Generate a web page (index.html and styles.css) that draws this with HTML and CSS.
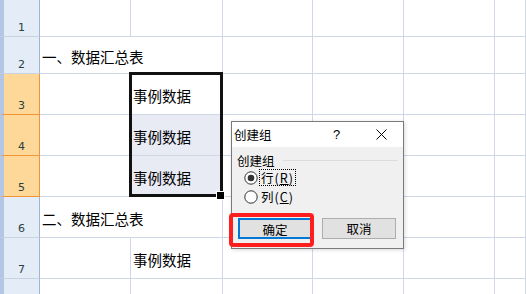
FILE: index.html
```html
<!DOCTYPE html>
<html lang="zh-CN">
<head>
    <meta charset="UTF-8">
    <title>创建组</title>
    <link rel="stylesheet" href="styles.css">
</head>
<body>
    <!-- Worksheet -->
    <div class="sheet">
        <div class="rh">1</div><div class="c"></div><div class="c"></div><div class="c"></div><div class="c"></div><div class="c"></div><div class="c"></div>
        <div class="rh">2</div><div class="c wide">一、数据汇总表</div><div class="c"></div><div class="c"></div><div class="c"></div><div class="c"></div>
        <div class="rh on">3</div><div class="c"></div><div class="c">事例数据</div><div class="c"></div><div class="c"></div><div class="c"></div><div class="c"></div>
        <div class="rh on">4</div><div class="c"></div><div class="c sel">事例数据</div><div class="c"></div><div class="c"></div><div class="c"></div><div class="c"></div>
        <div class="rh on">5</div><div class="c"></div><div class="c sel">事例数据</div><div class="c"></div><div class="c"></div><div class="c"></div><div class="c"></div>
        <div class="rh">6</div><div class="c wide">二、数据汇总表</div><div class="c"></div><div class="c"></div><div class="c"></div><div class="c"></div>
        <div class="rh">7</div><div class="c"></div><div class="c">事例数据</div><div class="c"></div><div class="c"></div><div class="c"></div><div class="c"></div>
        <div class="rh">8</div><div class="c"></div><div class="c">事例数据</div><div class="c"></div><div class="c"></div><div class="c"></div><div class="c"></div>
    </div>

    <!-- Selected range B3:B5 -->
    <div class="range"></div>

    <!-- Create group dialog -->
    <div class="dialog">
        <div class="titlebar">
            <span class="title">创建组</span>
            <span class="help">?</span>
            <svg class="close" width="11" height="11" viewBox="0 0 11 11">
                <path d="M0.5 0.5 L10.5 10.5 M10.5 0.5 L0.5 10.5" stroke="#000" stroke-width="1"/>
            </svg>
        </div>
        <div class="dlg-body">
            <div class="group-head">创建组</div>
            <div class="radio">
                <svg width="14" height="14" viewBox="0 0 14 14">
                    <circle cx="7" cy="7" r="6.2" fill="#fff" stroke="#333" stroke-width="1"/>
                    <circle cx="7" cy="7" r="3.3" fill="#333"/>
                </svg>
                <span class="lbl focus">行(<u>R</u>)</span>
            </div>
            <div class="radio">
                <svg width="14" height="14" viewBox="0 0 14 14">
                    <circle cx="7" cy="7" r="6.2" fill="#fff" stroke="#333" stroke-width="1"/>
                </svg>
                <span class="lbl">列(<u>C</u>)</span>
            </div>
            <div class="buttons">
                <button class="btn primary">确定</button>
                <button class="btn">取消</button>
            </div>
        </div>
    </div>

    <!-- Red highlight on OK -->
    <div class="mark"></div>
</body>
</html>
```

FILE: styles.css
```css
/* General */
* {
    box-sizing: border-box;
}
html, body {
    margin: 0;
    height: 100%;
    overflow: hidden;
    background-color: white;
}
body {
    position: relative;
    font-family: "Noto Sans CJK SC", sans-serif;
    color: black;
}

/* Worksheet grid */
.sheet {
    display: grid;
    grid-template-columns: 40px 91px 92px 90px 91px 91px 1fr;
    grid-template-rows: 37px 37px repeat(6, 41px);
}
.c {
    border-right: 1px solid #d0d7e5;
    border-bottom: 1px solid #d0d7e5;
    font-size: 14.5px;
    padding: 2px 0 0 2px;
    display: flex;
    align-items: center;
    white-space: nowrap;
}
.wide {
    grid-column: span 2;
}
.sel {
    background-color: #e8eaf4;
}
.rh {
    background-color: #e4ecf7;
    border-left: 4px solid #b3c7e4;
    border-right: 1px solid #9eb6ce;
    border-bottom: 1px solid #c5d3e3;
    font: 11px "DejaVu Sans", sans-serif;
    color: #27413e;
    display: flex;
    align-items: flex-end;
    justify-content: center;
    padding-bottom: 2px;
}
.rh.on {
    background-color: #fdd898;
    border-right-color: #f29436;
    border-bottom-color: #f29436;
}

/* Selection outline */
.range {
    position: absolute;
    left: 129px;
    top: 72px;
    width: 94px;
    height: 125px;
    border: 3px solid #111;
}
.range::after {
    content: "";
    position: absolute;
    right: -5px;
    bottom: -6px;
    width: 7px;
    height: 7px;
    background-color: #000;
    border: 1px solid #fff;
}

/* Dialog */
.dialog {
    position: absolute;
    left: 231px;
    top: 121px;
    width: 173px;
    height: 128px;
    border: 1px solid #7a7a7a;
    background-color: #f0f0f0;
    font-size: 12.5px;
    box-shadow: 1px 1px 4px rgba(0, 0, 0, 0.15);
}
.titlebar {
    height: 25px;
    background-color: white;
    display: flex;
    align-items: center;
    padding: 0 16px 1px 2px;
}
.title {
    flex: 1;
}
.help {
    width: 10px;
    margin-right: 33px;
    font: 13px "Liberation Sans", sans-serif;
}
.dlg-body {
    padding: 5px 5px 0 5px;
}
.group-head {
    height: 16px;
    display: flex;
    align-items: center;
}
.group-head::after {
    content: "";
    flex: 1;
    height: 1px;
    margin-left: 8px;
    background-color: #dcdcdc;
}
.radio {
    height: 19px;
    display: flex;
    align-items: center;
    padding-left: 7px;
}
.radio:first-of-type {
    margin-top: 2px;
}
.radio svg {
    margin-right: 2px;
}
.lbl {
    padding: 0 1px;
    letter-spacing: 1px;
    line-height: 15px;
}
.focus {
    outline: 1px dotted #000;
}
.buttons {
    display: flex;
    gap: 10px;
    margin-top: 12px;
    padding-left: 1px;
}
.btn {
    width: 74px;
    height: 21px;
    margin: 0;
    padding: 0;
    font: 12.5px "Noto Sans CJK SC", sans-serif;
    background-color: #e1e1e1;
    border: 1px solid #adadad;
    color: black;
}
.btn.primary {
    border: 2px solid #0078d7;
}

/* Red highlight box */
.mark {
    position: absolute;
    left: 229px;
    top: 213px;
    width: 85px;
    height: 34px;
    border: 4px solid #fe1e1e;
    border-radius: 4px;
}
```
